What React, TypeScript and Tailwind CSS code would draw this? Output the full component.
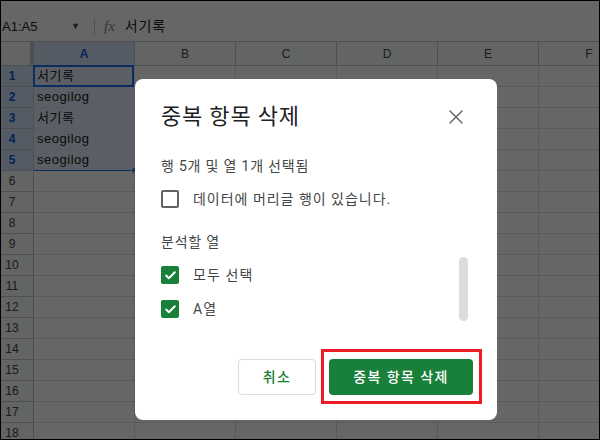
import { X, Check } from "lucide-react";

const cols = ["A", "B", "C", "D", "E", "F"];
const data: Record<number, string> = { 1: "서기록", 2: "seogilog", 3: "서기록", 4: "seogilog", 5: "seogilog" };
const rows = Array.from({ length: 18 }, (_, i) => i + 1);

const sheetFont = { fontFamily: '"Liberation Sans", "Noto Sans CJK KR", Arial, sans-serif' };
const uiFont = { fontFamily: 'Roboto, "Noto Sans CJK KR", "Noto Sans", sans-serif' };

const GreenBox = () => (
  <div className="w-[18px] h-[18px] rounded-[2px] bg-[#188038] flex items-center justify-center">
    <Check size={13} strokeWidth={3.5} className="text-white" />
  </div>
);

const Sheet = () => {
  return (
    <div className="flex flex-col bg-white" style={sheetFont}>
      {/* formula bar */}
      <div className="h-[41px] border-b border-[#c4c7c5] flex items-center pt-[11px] text-[#202124]">
        <span className="text-[13px] w-[70px] pl-[1px]">A1:A5</span>
        <span className="text-[9px] text-[#444] w-[20px]">▼</span>
        <div className="w-px h-[16px] bg-[#c4c7c5] ml-[3px]" />
        <span className="ml-[9px] text-[15px] italic text-[#888]" style={{ fontFamily: '"Liberation Serif", serif' }}>
          fx
        </span>
        <span className="ml-[10px] text-[14px] tracking-[0.06em]" style={uiFont}>서기록</span>
      </div>
      {/* column header */}
      <div className="flex h-[24px] border-b border-[#c4c7c5]">
        <div className="w-[33px] shrink-0 bg-[#f8f9fa] border-r-[4px] border-[#c4c7c5]" />
        {cols.map((c) => (
          <div
            key={c}
            className={`w-[101px] shrink-0 border-r border-[#c4c7c5] flex items-center justify-center text-[12px] ${
              c === "A" ? "bg-[#d3e3fd] text-[#0b57d0] font-bold" : "bg-[#f8f9fa] text-[#444]"
            }`}
          >
            {c}
          </div>
        ))}
      </div>
      {rows.map((r) => {
        const sel = r <= 5;
        return (
          <div key={r} className="flex h-[21px] shrink-0">
            <div
              className={`w-[33px] shrink-0 border-r border-b border-[#c4c7c5] flex items-center text-[12px] ${
                sel ? "bg-[#d3e3fd] text-[#0b57d0] font-bold" : "bg-[#f8f9fa] text-[#444]"
              }`}
            >
              <span className="w-[22px] text-center">{r}</span>
            </div>
            {cols.map((c) => {
              const inA = c === "A" && sel;
              return (
                <div
                  key={c}
                  className={`relative w-[101px] shrink-0 border-r border-b border-[#e1e1e1] flex items-center pl-[3px] text-[13px] text-[#202124] ${
                    inA ? "bg-[#e3ecfa] tracking-[0.04em]" : ""
                  } ${c === "A" && r === 5 ? "border-b-[#1a73e8]" : ""}`}
                >
                  {c === "A" ? data[r] ?? "" : ""}
                  {c === "A" && r === 1 && (
                    <div className="absolute -left-px -top-px w-[101px] h-[22px] border-2 border-[#1a73e8]" />
                  )}
                  {c === "A" && r === 5 && (
                    <div className="absolute -right-[4px] -bottom-[4px] w-[7px] h-[7px] rounded-full bg-[#1a73e8] border border-white" />
                  )}
                </div>
              );
            })}
          </div>
        );
      })}
    </div>
  );
};

const Dialog = () => (
  <div
    className="absolute left-[134px] top-[78px] w-[362px] h-[341px] bg-white rounded-lg flex flex-col pl-[26px] pr-6 pt-6 pb-[25px] text-[#202124] tracking-[0.05em]"
    style={uiFont}
  >
    <div className="flex items-center justify-between h-[28px]">
      <span className="text-[22px] leading-[28px]">중복 항목 삭제</span>
      <X size={24} strokeWidth={1.4} className="text-[#5f6368] mr-[5px]" />
    </div>
    <div className="mt-[25px] h-[20px] leading-[20px] text-[14px] text-[#444746]">행 5개 및 열 1개 선택됨</div>
    <div className="mt-[13px] h-[20px] flex items-center">
      <div className="w-[18px] h-[18px] rounded-[2px] border-2 border-[#5f6368]" />
      <span className="ml-[14px] text-[14px] text-[#444746] tracking-[0.07em]">데이터에 머리글 행이 있습니다.</span>
    </div>
    <div className="mt-[23px] h-[20px] leading-[20px] text-[14px] text-[#444746]">분석할 열</div>
    <div className="flex justify-between">
      <div className="flex flex-col pt-[13px]">
        <div className="h-[20px] flex items-center">
          <GreenBox />
          <span className="ml-[14px] text-[14px] text-[#444746] tracking-[0.08em]">모두 선택</span>
        </div>
        <div className="mt-[14px] h-[20px] flex items-center">
          <GreenBox />
          <span className="ml-[14px] text-[14px] text-[#444746] tracking-[0.08em]">A열</span>
        </div>
      </div>
      <div className="mt-[5px] mr-[5px] w-[9px] h-[64px] rounded-full bg-[#dadce0]" />
    </div>
    <div className="mt-auto flex justify-end gap-[13px]">
      <button className="w-[78px] h-9 rounded border border-[#dadce0] text-[#188038] text-[14px] font-medium bg-white tracking-[0.1em]">
        취소
      </button>
      <div className="relative">
        <button className="w-[144px] h-9 rounded bg-[#188038] text-white text-[14px] font-medium tracking-[0.1em]">
          중복 항목 삭제
        </button>
        <div className="absolute -left-[8px] -top-[10px] -right-[9px] -bottom-[9px] border-[3px] border-[#ed1c24]" />
      </div>
    </div>
  </div>
);

export default function App() {
  return (
    <div className="w-[600px] h-[440px] relative overflow-hidden border border-black bg-white">
      <Sheet />
      <div className="absolute inset-0 bg-black/60" />
      <Dialog />
    </div>
  );
}
